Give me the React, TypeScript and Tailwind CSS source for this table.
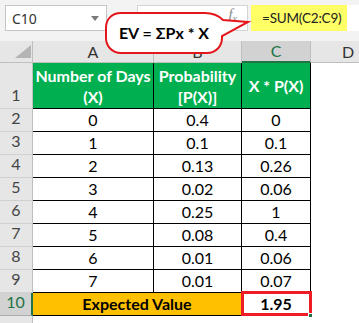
import React from "react";

const rows = [
  ["0", "0.4", "0"],
  ["1", "0.1", "0.1"],
  ["2", "0.13", "0.26"],
  ["3", "0.02", "0.06"],
  ["4", "0.25", "1"],
  ["5", "0.08", "0.4"],
  ["6", "0.01", "0.06"],
  ["7", "0.01", "0.07"],
];

const font = { fontFamily: "Lato, 'Liberation Sans', sans-serif" };

const RowHead = ({ label, h, active }: any) => (
  <div
    className={`w-[33px] shrink-0 ${h} flex items-end justify-center pb-[1px] text-[16px] border-b ${
      active
        ? "bg-[#d2d2d2] text-[#217346] border-r-2 border-r-[#217346] border-b-[#ababab]"
        : "bg-[#e6e6e6] text-[#444] border-r border-r-[#bfbfbf] border-b-[#d0d0d0]"
    }`}
  >
    {label}
  </div>
);

const Callout = () => (
  <div className="absolute left-[104px] top-[10px] w-[148px] h-[46px]">
    <svg width="148" height="46" viewBox="104 10 148 46" className="absolute inset-0">
      <path
        d="M121,13 H205 C213,13 219,16 223,20 L248,22 L222,36 V38 C222,46 216,53 207,53 H121 C112,53 106,46 106,38 V28 C106,19 112,13 121,13 Z"
        fill="white"
        stroke="#e4161c"
        strokeWidth="2"
      />
    </svg>
    <div className="absolute left-[2px] top-[2px] w-[116px] h-[41px] flex items-center justify-center text-[16px] font-bold text-black">
      EV = ΣPx * X
    </div>
  </div>
);

export default function App() {
  return (
    <div className="relative w-[359px] h-[323px] overflow-hidden bg-white" style={font}>
      {/* formula bar */}
      <div className="h-[41px] bg-[#f3f3f3] flex items-start pt-[5px] pl-[5px]">
        <div className="relative w-[102px] h-[26px] bg-white border border-[#c6c6c6] flex items-center pl-[6px] text-[14px] text-[#333]" style={{ fontFamily: "'Noto Sans', sans-serif" }}>
          C10
          <span className="absolute right-[7px] top-[10px] w-0 h-0 border-l-[4px] border-r-[4px] border-t-[5px] border-l-transparent border-r-transparent border-t-[#7a7a7a]" />
        </div>
        <div className="ml-[30px] w-[111px] h-[26px] bg-white border border-[#d4d4d4] flex items-start justify-end pr-[10px] pt-[1px]">
          <span className="italic text-[#8a8a8a] text-[15px] leading-none" style={{ fontFamily: "'Liberation Serif', serif" }}>
            f<sub className="text-[10px]">x</sub>
          </span>
        </div>
        <div className="ml-[3px] flex-1 h-[26px] bg-white flex">
          <div className="w-[96px] h-full bg-[#ffff66] flex items-center pl-[11px] text-[13.5px] tracking-[-0.2px] text-[#222]">
            =SUM(C2:C9)
          </div>
        </div>
      </div>

      {/* column headers */}
      <div className="flex h-[22px]">
        <div className="relative w-[33px] shrink-0 bg-[#e6e6e6] border-r border-b border-[#bfbfbf]">
          <svg width="33" height="22" className="absolute left-0 top-0">
            <polygon points="15,17 31,17 31,4" fill="#b4b4b4" />
          </svg>
        </div>
        <div className="w-[121px] shrink-0 bg-[#e6e6e6] border-r border-b border-[#bfbfbf] flex items-center justify-center text-[16px] text-[#333]">A</div>
        <div className="w-[88px] shrink-0 bg-[#e6e6e6] border-r border-b border-[#bfbfbf] flex items-center justify-center text-[16px] text-[#333]">B</div>
        <div className="w-[69px] shrink-0 bg-[#d2d2d2] border-r border-r-[#bfbfbf] border-b-2 border-b-[#217346] flex items-center justify-center text-[16px] text-[#217346]">C</div>
        <div className="w-[74px] shrink-0 bg-[#e6e6e6] border-b border-[#bfbfbf] flex items-center justify-center text-[16px] text-[#333]">D</div>
      </div>

      {/* row 1 headings */}
      <div className="flex h-[46px]">
        <RowHead label="1" h="h-[46px]" />
        <div className="w-[121px] shrink-0 bg-[#00b050] border-r border-b border-black flex flex-col items-center justify-center text-white font-bold text-[16px] leading-[21px]">
          <span>Number of Days</span>
          <span>(X)</span>
        </div>
        <div className="w-[88px] shrink-0 bg-[#00b050] border-r border-b border-black flex flex-col items-center justify-center text-white font-bold text-[16px] leading-[21px]">
          <span>Probability</span>
          <span>[P(X)]</span>
        </div>
        <div className="w-[69px] shrink-0 bg-[#00b050] border-r border-b border-black flex items-center justify-center text-white font-bold text-[16px]">
          X * P(X)
        </div>
        <div className="w-[74px] shrink-0 bg-white" />
      </div>

      {rows.map((r, i) => (
        <div key={i} className="flex h-[23px]">
          <RowHead label={String(i + 2)} h="h-[23px]" />
          <div className="w-[121px] shrink-0 border-r border-b border-black flex items-center justify-center text-[16px] text-black">{r[0]}</div>
          <div className="w-[88px] shrink-0 border-r border-b border-black flex items-center justify-center text-[16px] text-black">{r[1]}</div>
          <div className="w-[69px] shrink-0 border-r border-b border-black flex items-center justify-center text-[16px] text-black">{r[2]}</div>
          <div className="w-[74px] shrink-0" />
        </div>
      ))}

      {/* row 10 */}
      <div className="flex h-[23px]">
        <RowHead label="10" h="h-[23px]" active />
        <div className="w-[209px] shrink-0 bg-[#ffc000] border-r border-b border-black flex items-center justify-center text-[16px] font-bold text-black">
          Expected Value
        </div>
        <div className="relative w-[69px] shrink-0 border-r border-b border-black flex items-center justify-center text-[16px] font-bold text-black">
          1.95
          <span className="absolute -left-[1px] -top-[2px] w-[71px] h-[25px] border-[3px] border-[#ee1c24]" />
          <span className="absolute -right-[3px] -bottom-[3px] w-[5px] h-[5px] bg-[#217346] border border-white" />
        </div>
        <div className="w-[74px] shrink-0" />
      </div>

      <div className="flex h-[10px]">
        <div className="w-[33px] shrink-0 bg-[#e6e6e6] border-r border-[#bfbfbf]" />
      </div>

      <Callout />
    </div>
  );
}
